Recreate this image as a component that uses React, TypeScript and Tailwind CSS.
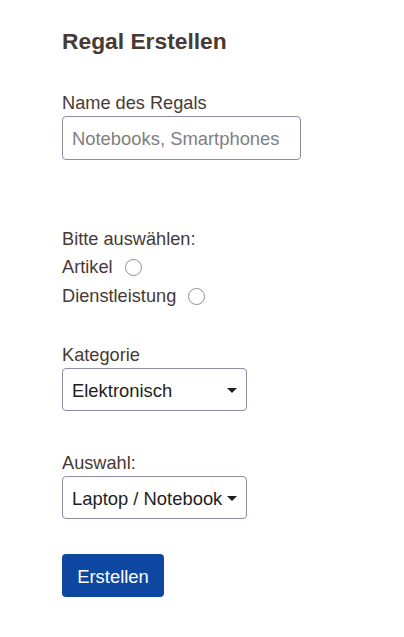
import { useState } from "react";

function Label({ children }: { children: React.ReactNode }) {
  return <label className="block h-[27px] pt-[1px] leading-[27px]">{children}</label>;
}

function Radio({
  label,
  checked,
  onChange,
}: {
  label: string;
  checked: boolean;
  onChange: () => void;
}) {
  return (
    <label className="flex h-[29px] items-center pt-[1px] leading-[29px]">
      <span>{label}</span>
      <input
        type="radio"
        name="typ"
        checked={checked}
        onChange={onChange}
        className="ml-[12px] h-[17px] w-[17px] appearance-none rounded-full border border-[#8a8ca3] bg-white checked:border-[5px] checked:border-[#0d47a1]"
      />
    </label>
  );
}

function Select({
  value,
  options,
  onChange,
}: {
  value: string;
  options: string[];
  onChange: (v: string) => void;
}) {
  return (
    <div className="relative h-[43px] w-[185px]">
      <select
        value={value}
        onChange={(e) => onChange(e.target.value)}
        className="h-full w-full appearance-none rounded-[4px] border border-[#8a8ca3] bg-white pl-[9px] pr-[20px] pt-[2px] text-[18.4px] text-[#1e1e1e] outline-none"
      >
        {options.map((o) => (
          <option key={o}>{o}</option>
        ))}
      </select>
      <span className="pointer-events-none absolute right-[10px] top-[20px] h-0 w-0 border-x-[5px] border-t-[5px] border-x-transparent border-t-[#1e1e1e]" />
    </div>
  );
}

export default function App() {
  const [typ, setTyp] = useState<"artikel" | "dienst" | null>(null);
  const [kategorie, setKategorie] = useState("Elektronisch");
  const [auswahl, setAuswahl] = useState("Laptop / Notebook");

  return (
    <div className="min-h-[637px] bg-white pl-[62px] pt-[27px] text-[18.2px] text-[#473a34] [font-family:'Liberation_Sans',Arial,sans-serif]">
      <h1 className="h-[27px] pt-[1px] text-[22.8px] font-bold leading-[27px] text-[#473a34]">
        Regal Erstellen
      </h1>

      <div className="mt-[35px]">
        <Label>Name des Regals</Label>
        <input
          type="text"
          placeholder="Notebooks, Smartphones"
          className="h-[44px] w-[239px] rounded-[4px] border border-[#8a8ca3] px-[9px] pt-[1px] text-[18.4px] text-[#1e1e1e] outline-none placeholder:text-[#808080]"
        />
      </div>

      <div className="mt-[65px]">
        <Label>Bitte auswählen:</Label>
        <Radio label="Artikel" checked={typ === "artikel"} onChange={() => setTyp("artikel")} />
        <Radio label="Dienstleistung" checked={typ === "dienst"} onChange={() => setTyp("dienst")} />
      </div>

      <div className="mt-[31px]">
        <Label>Kategorie</Label>
        <Select
          value={kategorie}
          options={["Elektronisch", "Haushalt", "Kleidung"]}
          onChange={setKategorie}
        />
      </div>

      <div className="mt-[38px]">
        <Label>Auswahl:</Label>
        <Select
          value={auswahl}
          options={["Laptop / Notebook", "Smartphone", "Tablet"]}
          onChange={setAuswahl}
        />
      </div>

      <button
        type="button"
        className="mt-[35px] h-[43px] w-[102px] rounded-[4px] bg-[#0d47a1] pt-[2px] text-[18.4px] text-white"
      >
        Erstellen
      </button>
    </div>
  );
}
